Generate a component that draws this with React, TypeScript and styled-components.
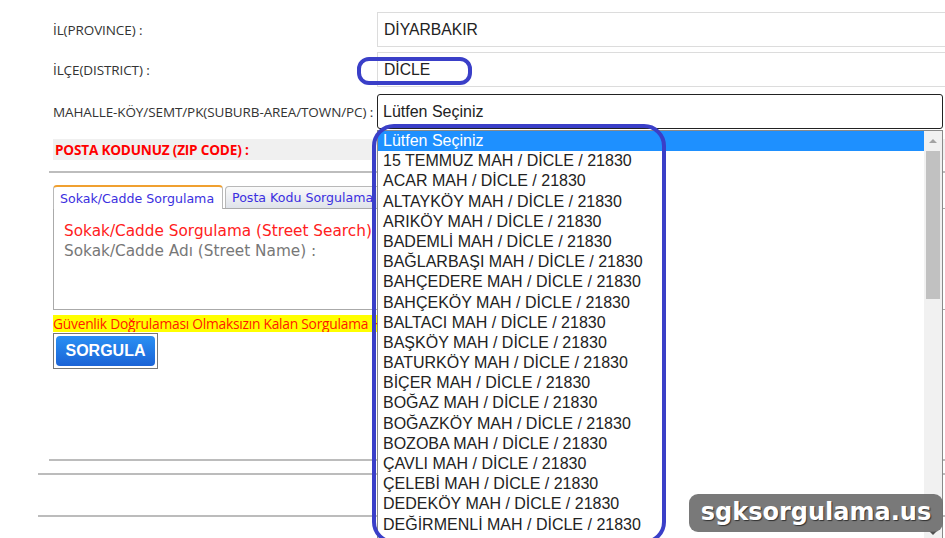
import styled, { createGlobalStyle } from 'styled-components'

const GlobalStyle = createGlobalStyle`
	html, body {
		margin: 0;
		padding: 0;
		background: #fff;
	}
	* {
		box-sizing: border-box;
	}
`

const neighbourhoods = [
	'15 TEMMUZ MAH',
	'ACAR MAH',
	'ALTAYKÖY MAH',
	'ARIKÖY MAH',
	'BADEMLİ MAH',
	'BAĞLARBAŞI MAH',
	'BAHÇEDERE MAH',
	'BAHÇEKÖY MAH',
	'BALTACI MAH',
	'BAŞKÖY MAH',
	'BATURKÖY MAH',
	'BİÇER MAH',
	'BOĞAZ MAH',
	'BOĞAZKÖY MAH',
	'BOZOBA MAH',
	'ÇAVLI MAH',
	'ÇELEBİ MAH',
	'DEDEKÖY MAH',
	'DEĞİRMENLİ MAH',
]

export default function App() {
	return (
		<Page>
			<GlobalStyle />
			<Form>
				<FieldRow $top={12}>
					<Label>İL(PROVINCE) :</Label>
					<TextBox>DİYARBAKIR</TextBox>
				</FieldRow>
				<FieldRow $top={5}>
					<Label>İLÇE(DISTRICT) :</Label>
					<TextBox>DİCLE</TextBox>
				</FieldRow>
				<FieldRow $top={7}>
					<Label>MAHALLE-KÖY/SEMT/PK(SUBURB-AREA/TOWN/PC) :</Label>
					<SelectBox>Lütfen Seçiniz</SelectBox>
				</FieldRow>
				<ZipRow>POSTA KODUNUZ (ZIP CODE) :</ZipRow>
				<Divider />

				<Tabs>
					<Tab $active>Sokak/Cadde Sorgulama</Tab>
					<Tab>Posta Kodu Sorgulama</Tab>
				</Tabs>
				<TabPanel>
					<PanelTitle>Sokak/Cadde Sorgulama (Street Search)</PanelTitle>
					<PanelLabel>Sokak/Cadde Adı (Street Name) :</PanelLabel>
				</TabPanel>
				<Warning>Güvenlik Doğrulaması Olmaksızın Kalan Sorgulama Hakkınız : 20</Warning>
				<ButtonFrame>
					<QueryButton type='button'>SORGULA</QueryButton>
				</ButtonFrame>
				<Rule $top={90} $left={-4} />
			</Form>
			<Rule $top={12} $left={38} />
			<Rule $top={40} $left={38} />

			<ListBox>
				<Option $selected>Lütfen Seçiniz</Option>
				{neighbourhoods.map(name => (
					<Option key={name}>{name} / DİCLE / 21830</Option>
				))}
				<ScrollTrack>
					<ArrowUp />
					<Thumb />
					<ArrowDown />
				</ScrollTrack>
			</ListBox>

			<Mark $x={357} $y={57} $w={115} $h={28} $r={12} />
			<Mark $x={372} $y={124} $w={294} $h={420} $r={22} />

			<Watermark>sgksorgulama.us</Watermark>
		</Page>
	)
}

const Page = styled.div`
	position: relative;
	width: 945px;
	height: 538px;
	overflow: hidden;
	background: #fff;
`

const Form = styled.div`
	padding-left: 53px;
	display: flex;
	flex-direction: column;
`

const FieldRow = styled.div<{ $top: number }>`
	display: grid;
	grid-template-columns: 324px 1fr;
	align-items: center;
	margin-top: ${p => p.$top}px;
	height: 35px;
`

const Label = styled.div`
	font-family: 'Open Sans', 'Noto Sans', sans-serif;
	font-size: 13.5px;
	color: #333;
	white-space: nowrap;
	letter-spacing: -0.1px;
`

const TextBox = styled.div`
	height: 35px;
	margin-right: -20px;
	border: 1px solid #dcdcdc;
	padding: 0 6px;
	display: flex;
	align-items: center;
	font-family: 'Liberation Sans', Arial, sans-serif;
	font-size: 15.7px;
	color: #222;
`

const SelectBox = styled.div`
	height: 35px;
	margin-right: 2px;
	border: 1.5px solid #222;
	border-radius: 3px;
	padding: 0 5px;
	display: flex;
	align-items: center;
	font-family: 'Liberation Sans', Arial, sans-serif;
	font-size: 16px;
	color: #222;
`

const ZipRow = styled.div`
	margin-top: 10px;
	height: 21px;
	background: #f0f0f0;
	padding-left: 2px;
	display: flex;
	align-items: center;
	font-family: 'Open Sans', 'Noto Sans', sans-serif;
	font-weight: 700;
	font-size: 13.6px;
	letter-spacing: -0.2px;
	color: #f00;
`

const Divider = styled.div`
	margin: 11px 0 0 -4px;
	height: 2px;
	background: #bdbdbd;
`

const Tabs = styled.div`
	display: flex;
	gap: 2px;
	margin-top: 11px;
	height: 24px;
	align-items: flex-end;
`

const Tab = styled.div<{ $active?: boolean }>`
	height: ${p => (p.$active ? 24 : 22)}px;
	width: ${p => (p.$active ? 170 : 160)}px;
	padding: 0 6px;
	display: flex;
	align-items: center;
	font-family: 'DejaVu Sans', Verdana, sans-serif;
	font-size: 12.6px;
	color: #3b2fe0;
	white-space: nowrap;
	border: 1px solid #b8b8b8;
	border-bottom: none;
	border-radius: 4px 4px 0 0;
	background: ${p => (p.$active ? '#fff' : 'linear-gradient(#fafafa, #dfe3ea)')};
	border-top: ${p => (p.$active ? '2px solid #f0a030' : '1px solid #b8b8b8')};
	position: relative;
	margin-bottom: ${p => (p.$active ? -1 : 0)}px;
	z-index: ${p => (p.$active ? 1 : 0)};
`

const TabPanel = styled.div`
	height: 102px;
	margin-right: -100px;
	border: 1px solid #aaa;
	padding: 12px 10px;
	font-family: 'DejaVu Sans', Verdana, sans-serif;
	font-size: 15.3px;
	line-height: 20px;
`

const PanelTitle = styled.div`
	color: #ff2020;
	white-space: nowrap;
`

const PanelLabel = styled.div`
	color: #777;
	white-space: nowrap;
`

const Warning = styled.div`
	margin-top: 5px;
	width: 324px;
	height: 17px;
	background: #ffff00;
	color: #ff1a00;
	font-family: 'Open Sans', 'Noto Sans', sans-serif;
	font-size: 13.8px;
	line-height: 17px;
	letter-spacing: -0.25px;
	white-space: nowrap;
	overflow: hidden;
`

const ButtonFrame = styled.div`
	margin-top: 1px;
	width: 105px;
	height: 36px;
	border: 1px solid #777;
	padding: 2px;
`

const QueryButton = styled.button`
	width: 100%;
	height: 100%;
	border: none;
	border-radius: 4px;
	background: linear-gradient(#2a90f4, #1b63d6);
	color: #fff;
	font-family: 'Liberation Sans', Arial, sans-serif;
	font-weight: 700;
	font-size: 16px;
	padding: 0;
`

const Rule = styled.div<{ $top: number; $left: number }>`
	margin-top: ${p => p.$top}px;
	margin-left: ${p => p.$left}px;
	height: 2px;
	background: #bcbcbc;
`

const ListBox = styled.div`
	position: absolute;
	top: 130px;
	left: 377px;
	width: 566px;
	height: 420px;
	background: #fff;
	border: 1px solid #8a8a8a;
	padding-right: 18px;
	font-family: 'Liberation Sans', Arial, sans-serif;
	font-size: 16px;
	color: #222;
`

const Option = styled.div<{ $selected?: boolean }>`
	height: 20.2px;
	line-height: 20.2px;
	padding-left: 5px;
	white-space: nowrap;
	background: ${p => (p.$selected ? '#1e90ff' : 'transparent')};
	color: ${p => (p.$selected ? '#fff' : '#222')};
`

const ScrollTrack = styled.div`
	position: absolute;
	top: 0;
	right: 0;
	bottom: 0;
	width: 18px;
	background: #f1f1f1;
	display: flex;
	flex-direction: column;
	align-items: center;
`

const ArrowUp = styled.div`
	margin-top: 8px;
	width: 0;
	height: 0;
	border-left: 4px solid transparent;
	border-right: 4px solid transparent;
	border-bottom: 4px solid #a3a3a3;
`

const Thumb = styled.div`
	margin-top: 8px;
	width: 14px;
	height: 148px;
	background: #c1c1c1;
`

const ArrowDown = styled.div`
	position: absolute;
	top: 400px;
	width: 0;
	height: 0;
	border-left: 4px solid transparent;
	border-right: 4px solid transparent;
	border-top: 4px solid #505050;
`

const Mark = styled.div<{ $x: number; $y: number; $w: number; $h: number; $r: number }>`
	position: absolute;
	left: ${p => p.$x}px;
	top: ${p => p.$y}px;
	width: ${p => p.$w}px;
	height: ${p => p.$h}px;
	border: 4px solid #3a3fc8;
	border-radius: ${p => p.$r}px;
	pointer-events: none;
`

const Watermark = styled.div`
	position: absolute;
	left: 689px;
	top: 494px;
	width: 254px;
	height: 38px;
	border-radius: 9px;
	background: rgba(110, 110, 110, 0.92);
	color: #fff;
	font-family: 'DejaVu Sans', sans-serif;
	font-weight: 700;
	font-size: 24px;
	display: flex;
	align-items: center;
	justify-content: center;
	padding-bottom: 2px;
	text-shadow: 1px 1px 1px rgba(0, 0, 0, 0.6);
`
